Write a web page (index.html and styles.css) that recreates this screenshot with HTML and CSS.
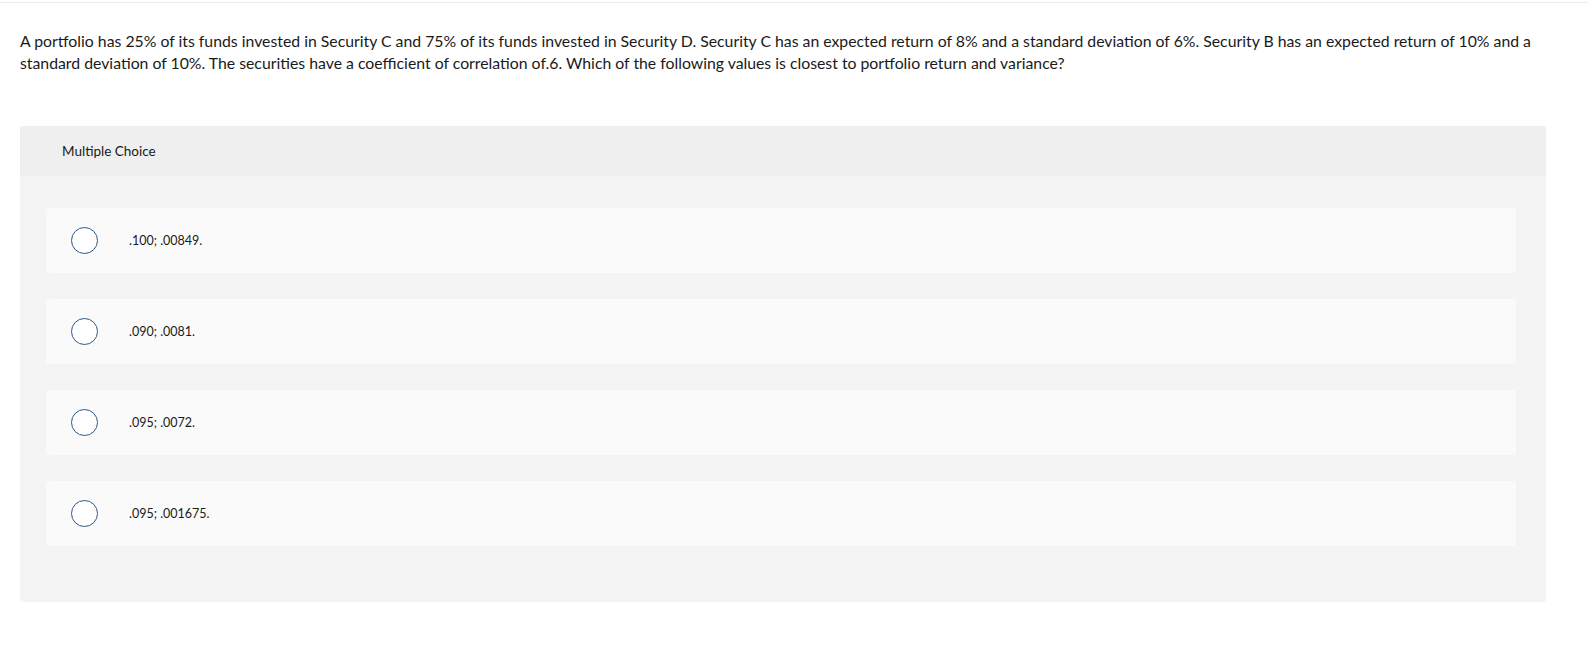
FILE: index.html
```html
<!DOCTYPE html>
<html>
<head>
<meta charset="utf-8">
<link rel="stylesheet" href="styles.css">
</head>
<body>
<div class="topline"></div>
<div class="page">
  <p class="question">A portfolio has 25% of its funds invested in Security C and 75% of its funds invested in Security D. Security C has an expected return of 8% and a standard deviation of 6%. Security B has an expected return of 10% and a standard deviation of 10%. The securities have a coefficient of correlation of.6. Which of the following values is closest to portfolio return and variance?</p>
  <div class="mc">
    <div class="mc-head">Multiple Choice</div>
    <div class="mc-body">
      <div class="opt"><span class="radio"></span><span class="label">.100; .00849.</span></div>
      <div class="opt"><span class="radio"></span><span class="label">.090; .0081.</span></div>
      <div class="opt"><span class="radio"></span><span class="label">.095; .0072.</span></div>
      <div class="opt"><span class="radio"></span><span class="label">.095; .001675.</span></div>
    </div>
  </div>
</div>
</body>
</html>
```
FILE: styles.css
```css
html, body {
  margin: 0;
  padding: 0;
  background: #fff;
}
body {
  font-family: "Lato", "Liberation Sans", sans-serif;
  color: #1a1a1a;
}
.topline {
  height: 2px;
  border-bottom: 1px solid #ececec;
}
.page {
  padding: 0 42px 0 20px;
}
.question {
  margin: 0;
  padding-top: 27px;
  font-size: 15.8px;
  line-height: 22px;
}
.mc {
  margin-top: 52px;
  background: #f4f4f4;
  border-radius: 3px;
  overflow: hidden;
}
.mc-head {
  background: #efefef;
  height: 50px;
  padding-left: 42px;
  display: flex;
  align-items: center;
  font-size: 13.5px;
}
.mc-body {
  padding: 32px 30px 56px 26px;
  display: flex;
  flex-direction: column;
  gap: 26px;
}
.opt {
  background: #fafafa;
  border-radius: 3px;
  height: 65px;
  display: flex;
  align-items: center;
  padding-left: 25px;
}
.radio {
  width: 25px;
  height: 25px;
  border: 1.5px solid #2a5888;
  border-radius: 50%;
  background: #fff;
  flex: none;
}
.label {
  margin-left: 31px;
  font-size: 12.5px;
}
```
